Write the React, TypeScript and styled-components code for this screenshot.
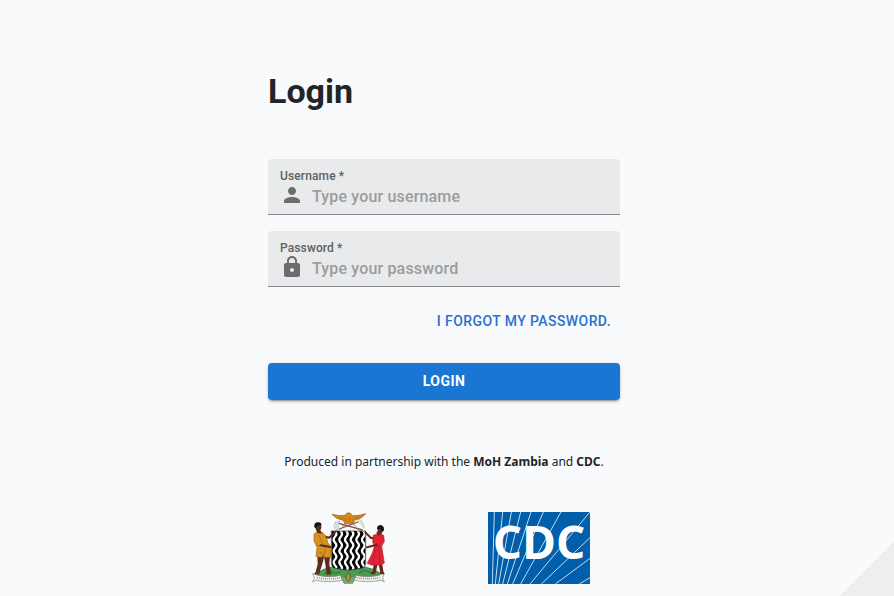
import React, { useState } from "react";
import styled, { createGlobalStyle } from "styled-components";

const GlobalStyle = createGlobalStyle`
  *, *::before, *::after { box-sizing: border-box; }
  body {
    margin: 0;
    background: #f8fafc;
    color: #212529;
    font-family: Roboto, "Liberation Sans", sans-serif;
  }
`;

const Page = styled.main`
  min-height: 100vh;
  display: flex;
  justify-content: center;
  padding: 67px 22px 12px 16px;
  background: linear-gradient(135deg, transparent 50%, #eeeeee 50%) right bottom / 54px 54px no-repeat;
`;

const Panel = styled.form`
  width: 100%;
  max-width: 352px;
  display: flex;
  flex-direction: column;
`;

const Title = styled.h1`
  margin: 0 0 44px;
  font-size: 34px;
  line-height: 48px;
  font-weight: 700;
`;

const Fields = styled.div`
  display: flex;
  flex-direction: column;
  gap: 16px;
`;

const Field = styled.div`
  display: flex;
  flex-direction: column;
  height: 56px;
  padding: 9px 12px 0;
  background: #e8eaeb;
  border-bottom: 1px solid #85878a;
  border-radius: 4px 4px 0 0;
`;

const Label = styled.label`
  font-size: 12px;
  line-height: 16px;
  font-weight: 500;
  letter-spacing: 0.01em;
  color: #606163;
`;

const InputRow = styled.div`
  display: flex;
  align-items: center;
  gap: 8px;
  height: 22px;

  svg {
    flex: none;
    fill: #6b6c6d;
  }
`;

const Input = styled.input`
  flex: 1;
  min-width: 0;
  height: 24px;
  padding: 2px 0 0;
  border: 0;
  outline: 0;
  background: transparent;
  color: #212529;
  font: 500 16px/22px Roboto, "Liberation Sans", sans-serif;
  letter-spacing: 0.01em;

  &::placeholder {
    color: #9b9c9d;
    opacity: 1;
  }
`;

const ForgotLink = styled.a`
  align-self: flex-end;
  margin: 16px 0 24px;
  padding: 6px 9px;
  font-size: 14px;
  line-height: 24px;
  font-weight: 500;
  letter-spacing: 0.03em;
  text-transform: uppercase;
  text-decoration: none;
  color: #2a70ce;
`;

const SubmitButton = styled.button`
  height: 37px;
  padding: 0 8px 2px;
  border: 0;
  border-radius: 4px;
  background: #1976d2;
  color: #fff;
  font: 700 14px/24px Roboto, "Liberation Sans", sans-serif;
  letter-spacing: 0.03em;
  text-transform: uppercase;
  cursor: pointer;
  box-shadow: 0 3px 1px -2px rgba(0, 0, 0, 0.2), 0 2px 2px rgba(0, 0, 0, 0.14), 0 1px 5px rgba(0, 0, 0, 0.12);
`;

const Partners = styled.p`
  margin: 52px 0 40px;
  font-family: "Noto Sans", "Open Sans", sans-serif;
  font-size: 12px;
  line-height: 20px;
  text-align: center;
  white-space: nowrap;
`;

const Logos = styled.div`
  display: grid;
  grid-template-columns: 1fr 1fr;
  column-gap: 28px;
  justify-items: center;

  svg {
    display: block;
    overflow: visible;
  }
`;

const WAVES = [88, 105, 122, 139, 156, 173];
const RAYS = [
  "M37 237L43 21",
  "M46 237L68 21",
  "M56 237L94 21",
  "M68 237L122 21",
  "M82 237L153 21",
  "M98 237L190 21",
  "M122 237L243 21",
  "M150 237L330 21",
  "M184 237L330 98",
  "M226 237L330 160",
  "M298 237L330 218",
];

function PersonIcon() {
  return (
    <svg width="24" height="24" viewBox="0 0 24 24" aria-hidden="true">
      <path d="M12 12c2.21 0 4-1.79 4-4s-1.79-4-4-4-4 1.79-4 4 1.79 4 4 4m0 2c-2.67 0-8 1.34-8 4v2h16v-2c0-2.66-5.33-4-8-4" />
    </svg>
  );
}

function LockIcon() {
  return (
    <svg width="24" height="24" viewBox="0 0 24 24" aria-hidden="true">
      <path d="M18 8h-1V6c0-2.76-2.24-5-5-5S7 3.24 7 6v2H6c-1.1 0-2 .9-2 2v10c0 1.1.9 2 2 2h12c1.1 0 2-.9 2-2V10c0-1.1-.9-2-2-2m-6 9c-1.1 0-2-.9-2-2s.9-2 2-2 2 .9 2 2-.9 2-2 2m3.100-9H8.900V6c0-1.710 1.390-3.100 3.100-3.100s3.100 1.390 3.100 3.100z" />
    </svg>
  );
}

function ZambiaArms() {
  return (
    <svg width="74" height="72" viewBox="21 21 222 216" role="img" aria-label="Coat of arms of Zambia">
      <defs>
        <clipPath id="shield">
          <path d="M79 78H182V176Q181 188 168 190L131 196L93 190Q80 188 79 176Z" />
        </clipPath>
      </defs>
      <path d="M33 207Q55 189 84 186L131 192L180 186Q207 190 230 207L207 217L154 219L130 232L105 219L52 217Z" fill="#4b9b4f" stroke="#426348" strokeWidth="2" />
      <path d="M55 207l20-9 17 8 15-8M161 204l18-8 25 10" fill="none" stroke="#29723c" strokeWidth="3" />
      <path d="M23 206Q32 203 37 211Q75 220 108 211L120 224Q79 235 33 226L23 231L28 219Z" fill="#eef0e9" stroke="#7e817e" strokeWidth="2" />
      <path d="M237 206Q228 203 223 211Q186 220 152 211L140 224Q180 235 228 226L238 231L233 219Z" fill="#eef0e9" stroke="#7e817e" strokeWidth="2" />
      <path d="M36 218Q76 226 110 217M151 217Q187 225 224 218" fill="none" stroke="#777" strokeWidth="4" strokeDasharray="3 3 2 4" />
      <path d="M107 212Q129 222 153 212L143 235H117Z" fill="#78a878" stroke="#55805a" strokeWidth="2" />
      <path d="M130 203Q139 211 135 225L130 230L124 224Q121 211 130 203" fill="#cb8a27" stroke="#476a38" strokeWidth="3" />

      <g clipPath="url(#shield)">
        <path d="M79 78H182V200H79Z" fill="#080808" />
        {WAVES.map((x) => (
          <path
            key={x}
            d={`M${x} 72c0 7 6 7 6 15s-8 9-8 17 8 9 8 17-8 9-8 17 8 9 8 17-8 9-8 17 8 9 8 17-6 9-6 17`}
            fill="none"
            stroke="#fff"
            strokeWidth="7"
          />
        ))}
      </g>
      <path d="M79 78H182V176Q181 188 168 190L131 196L93 190Q80 188 79 176Z" fill="none" stroke="#222" strokeWidth="2" />

      <path d="M95 75L169 47M91 52L173 75" stroke="#875747" strokeWidth="4" fill="none" />
      <path d="M90 53l14-6-5 14 5 16-13-5-4-8z" fill="#e0e2e2" stroke="#8a8c8d" strokeWidth="1" />
      <path d="M163 43q15 8 14 27l-9-14-11-4z" fill="#e8eaea" stroke="#8a8c8d" strokeWidth="1" />
      <path d="M81 28Q103 34 121 31L126 24L135 24L142 32Q162 33 182 26Q172 41 150 45L144 54L121 57L114 46Q92 42 81 28Z" fill="#d98918" stroke="#8d5717" strokeWidth="2" />
      <path d="M98 36l21 5M145 40l22-6M124 38l-3 13M133 35v17M140 39l3 9" stroke="#a8661a" strokeWidth="2" />
      <path d="M119 57l-8 7M144 56l9 9" stroke="#66401c" strokeWidth="2" />

      <path d="M37 150L38 178L31 205H43L52 177L58 153ZM56 151L61 177L65 207H78L73 177L75 151Z" fill="#5b2c1d" />
      <path d="M27 87L36 80L52 82L64 94L68 113L77 124L79 157H57L53 145L51 157L33 155L36 127L27 108Z" fill="#d9921e" stroke="#9a6514" strokeWidth="2" />
      <path d="M37 122l30-1M41 89l13 30M61 126l-3 24M42 142l9 2" stroke="#9a6514" strokeWidth="2" fill="none" />
      <path d="M47 121L76 126M64 96L72 98L92 80" fill="none" stroke="#5b2c1d" strokeWidth="6" strokeLinecap="round" strokeLinejoin="round" />
      <path d="M34 75l14 2 2 9-13-2z" fill="#5b2c1d" />
      <path d="M31 59Q33 52 42 54Q50 58 49 68L45 79Q38 82 33 75Z" fill="#5b2c1d" />
      <path d="M28 66Q26 52 39 52Q51 53 49 60L37 62L33 71Z" fill="#111" />
      <path d="M30 202l-1 7 15-1v-6M65 204v6l16-2-5-5" fill="#5f3827" />

      <path d="M207 173L202 203H212L219 173ZM220 173L226 204H236L231 173Z" fill="#67291d" />
      <path d="M205 91L222 86L236 91L238 109L230 124L238 174L227 180L199 180L187 175L202 144L208 125L203 110Z" fill="#e02335" stroke="#bd1d2d" strokeWidth="2" />
      <path d="M209 126l19-1M211 134l-6 39M221 132l4 42" stroke="#a6192b" strokeWidth="2" fill="none" />
      <path d="M204 99L198 99L181 82M216 119L186 127" fill="none" stroke="#67291d" strokeWidth="6" strokeLinecap="round" strokeLinejoin="round" />
      <path d="M215 80h15v8l-9 4-6-5z" fill="#67291d" />
      <path d="M217 66Q232 60 235 72L231 84Q221 88 218 80Z" fill="#67291d" />
      <path d="M216 72Q216 60 227 60Q240 63 236 78L230 80L228 71Z" fill="#141111" />
      <path d="M200 201h12l-2 7h-13ZM225 202h12l2 6h-13Z" fill="#67291d" />
    </svg>
  );
}

function CdcLogo() {
  return (
    <svg width="102" height="72" viewBox="24 21 306 216" role="img" aria-label="CDC">
      <path d="M24 21H330V237H24Z" fill="#005eaa" />
      {RAYS.map((ray) => (
        <path key={ray} d={ray} stroke="#c3dcf0" strokeWidth="3" />
      ))}
      <text x="177" y="163" textAnchor="middle" fill="#fff" fontFamily="'Open Sans', sans-serif" fontWeight="700" fontSize="138">
        CDC
      </text>
    </svg>
  );
}

export default function App() {
  const [username, setUsername] = useState("");
  const [password, setPassword] = useState("");

  return (
    <>
      <GlobalStyle />
      <Page>
        <Panel onSubmit={(event) => event.preventDefault()}>
          <Title>Login</Title>
          <Fields>
            <Field>
              <Label htmlFor="username">Username *</Label>
              <InputRow>
                <PersonIcon />
                <Input
                  id="username"
                  placeholder="Type your username"
                  value={username}
                  onChange={(event) => setUsername(event.target.value)}
                />
              </InputRow>
            </Field>
            <Field>
              <Label htmlFor="password">Password *</Label>
              <InputRow>
                <LockIcon />
                <Input
                  id="password"
                  type="password"
                  placeholder="Type your password"
                  value={password}
                  onChange={(event) => setPassword(event.target.value)}
                />
              </InputRow>
            </Field>
          </Fields>
          <ForgotLink href="#forgot">I forgot my password.</ForgotLink>
          <SubmitButton type="submit">Login</SubmitButton>
          <Partners>
            Produced in partnership with the <strong>MoH Zambia</strong> and <strong>CDC</strong>.
          </Partners>
          <Logos>
            <ZambiaArms />
            <CdcLogo />
          </Logos>
        </Panel>
      </Page>
    </>
  );
}
